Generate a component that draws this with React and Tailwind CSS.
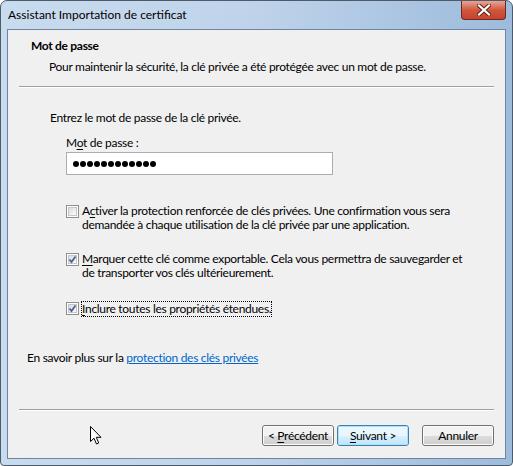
import React from "react";

const U = ({ children }) => <span className="underline underline-offset-2">{children}</span>;

function Check({ checked }) {
  return (
    <div className="w-[13px] h-[13px] border border-[#8e8f8f] bg-white p-[1px] shrink-0">
      <div className="w-full h-full border border-[#c5c7cb] bg-gradient-to-br from-[#dcdcdc] to-[#fbfbfb] relative">
        {checked && (
          <svg viewBox="0 0 9 9" className="absolute -left-[1px] -top-[1px] w-[9px] h-[9px]">
            <path d="M1.5 4.5 L3.5 7 L7.5 1.5" stroke="#4a5f97" strokeWidth="1.8" fill="none" />
          </svg>
        )}
      </div>
    </div>
  );
}

function Btn({ children, def }) {
  return (
    <div
      className={
        "w-[72px] h-[21px] rounded-[3px] border flex items-center justify-center relative overflow-hidden " +
        (def ? "border-[#3c7fb1]" : "border-[#707070]")
      }
    >
      <div className={"absolute inset-0 flex flex-col " + (def ? "border border-[#aee0f8] rounded-[2px]" : "border border-[#fcfcfc] rounded-[2px]")}>
        <div className={"h-1/2 " + (def ? "bg-[#eaf6fd]" : "bg-[#f2f2f2]")} />
        <div className={"h-1/2 " + (def ? "bg-gradient-to-b from-[#d9f0fc] to-[#bee6fd]" : "bg-gradient-to-b from-[#dddddd] to-[#cfcfcf]")} />
      </div>
      <span className="relative text-black">{children}</span>
    </div>
  );
}

export default function App() {
  return (
    <div
      className="w-[513px] h-[466px] relative bg-white text-[12px] leading-[15px] tracking-[-0.3px] text-black"
      style={{ fontFamily: 'Lato, "Noto Sans", sans-serif' }}
    >
      <div className="w-[513px] h-[466px] rounded-t-[7px] rounded-b-[4px] border border-[#4d5a69] bg-gradient-to-r from-[#c9dbee] via-[#bed3ea] to-[#9dbbdc] flex flex-col">
        {/* Title bar */}
        <div className="h-[28px] flex items-start shrink-0">
          <div className="pl-[7px] pt-[6px] text-[12px] tracking-normal text-black">Assistant Importation de certificat</div>
          <div className="ml-auto mr-[6px] w-[45px] h-[19px] rounded-b-[4px] border border-t-0 border-[#6b2a1f] bg-gradient-to-b from-[#e7a595] via-[#d0563d] to-[#c7432a] flex items-center justify-center">
            <svg viewBox="0 0 14 12" className="w-[14px] h-[12px]">
              <path d="M2 1.5 L12 10.5 M12 1.5 L2 10.5" stroke="#5a1d12" strokeWidth="4" strokeLinecap="square" />
              <path d="M2 1.5 L12 10.5 M12 1.5 L2 10.5" stroke="#ffffff" strokeWidth="2.2" strokeLinecap="square" />
            </svg>
          </div>
        </div>
        {/* Content */}
        <div className="mx-[6px] mb-[6px] flex-1 border border-[#6e84a0] bg-[#f0f0f0] flex flex-col">
          <div className="pl-[23px] pt-[8px] font-bold">Mot de passe</div>
          <div className="pl-[41px] pt-[6px]">Pour maintenir la sécurité, la clé privée a été protégée avec un mot de passe.</div>
          <div className="mx-[11px] mt-[12px] h-[2px] border-t border-[#a0a0a0] border-b-white border-b" />
          <div className="pl-[42px] pt-[22px]">Entrez le mot de passe de la clé privée.</div>
          <div className="pl-[58px] pt-[10px]">
            M<U>o</U>t de passe :
          </div>
          <div className="ml-[58px] mt-[2px] w-[267px] h-[23px] border border-[#abadb3] border-t-[#abadb3] bg-white flex items-center pl-[6px]">
            <div className="flex gap-[1px]">
              {Array.from({ length: 12 }).map((_, i) => (
                <div key={i} className="w-[6px] h-[6px] rounded-full bg-black" />
              ))}
            </div>
          </div>
          <div className="pl-[58px] pt-[29px] flex gap-[3px]">
            <div className="pt-[1px]"><Check /></div>
            <div className="leading-[14px] w-[390px]">
              A<U>c</U>tiver la protection renforcée de clés privées. Une confirmation vous sera demandée à chaque utilisation de la clé privée par une application.
            </div>
          </div>
          <div className="pl-[58px] pt-[20px] flex gap-[3px]">
            <div className="pt-[1px]"><Check checked /></div>
            <div className="leading-[14px] w-[390px]">
              <U>M</U>arquer cette clé comme exportable. Cela vous permettra de sauvegarder et de transporter vos clés ultérieurement.
            </div>
          </div>
          <div className="pl-[58px] pt-[21px] flex gap-[2px] items-start">
            <div className="pt-[1px]"><Check checked /></div>
            <div className="border border-dotted border-black px-[0px] leading-[14px]">
              <U>I</U>nclure toutes les propriétés étendues.
            </div>
          </div>
          <div className="pl-[19px] pt-[33px]">
            En savoir plus sur la{" "}
            <span className="text-[#0066cc] underline">protection des clés privées</span>
          </div>
          <div className="flex-1" />
          <div className="mx-[11px] h-[2px] border-t border-[#a0a0a0] border-b-white border-b" />
          <div className="flex pt-[14px] pb-[12px] pr-[11px] justify-end">
            <Btn>&lt; <U>P</U>récédent</Btn>
            <div className="w-[3px]" />
            <Btn def><U>S</U>uivant &gt;</Btn>
            <div className="w-[13px]" />
            <Btn>Annuler</Btn>
          </div>
        </div>
      </div>
      {/* mouse cursor */}
      <svg viewBox="0 0 12 19" className="absolute left-[90px] top-[426px] w-[12px] h-[19px]">
        <path d="M0.5 0.5 L0.5 15.5 L4 12.2 L6.5 18 L8.7 17 L6.3 11.3 L11 11.3 Z" fill="white" stroke="black" strokeWidth="1" strokeLinejoin="miter" />
      </svg>
    </div>
  );
}
